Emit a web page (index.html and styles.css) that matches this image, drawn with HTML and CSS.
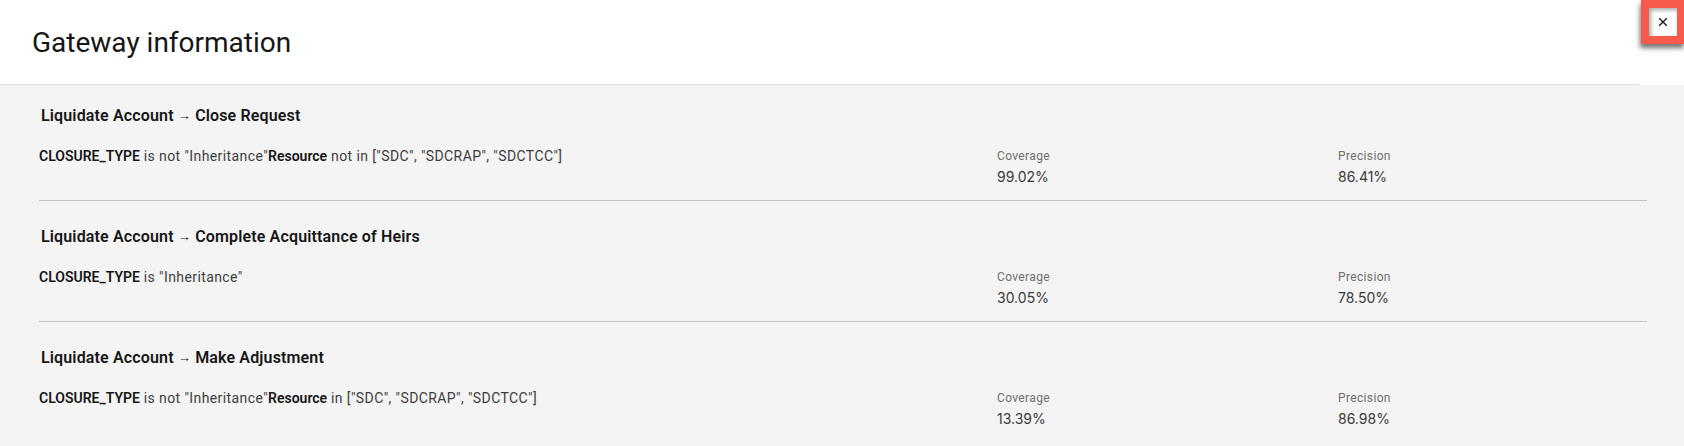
FILE: index.html
```html
<!DOCTYPE html>
<html lang="en">
<head>
<meta charset="utf-8">
<title>Gateway information</title>
<link rel="stylesheet" href="styles.css">
</head>
<body>
<div class="modal">
  <header class="modal-header">
    <h2 class="modal-title">Gateway information</h2>
  </header>
  <button class="close-btn" aria-label="Close">
    <svg width="16" height="16" viewBox="0 0 16 16" aria-hidden="true">
      <path d="M4.2 4.2 L11.8 11.8 M11.8 4.2 L4.2 11.8" stroke="#161616" stroke-width="1.3" fill="none"/>
    </svg>
  </button>
  <div class="modal-body">
    <section class="rule">
      <h3 class="rule-title">Liquidate Account <span class="arrow">→</span> Close Request</h3>
      <div class="rule-grid">
        <p class="cond"><b>CLOSURE_TYPE</b> is not "Inheritance"<b>Resource</b> not in ["SDC", "SDCRAP", "SDCTCC"]</p>
        <div class="metric"><span class="metric-label">Coverage</span><span class="metric-value">99.02%</span></div>
        <div class="metric"><span class="metric-label">Precision</span><span class="metric-value">86.41%</span></div>
      </div>
    </section>
    <section class="rule">
      <h3 class="rule-title">Liquidate Account <span class="arrow">→</span> Complete Acquittance of Heirs</h3>
      <div class="rule-grid">
        <p class="cond"><b>CLOSURE_TYPE</b> is "Inheritance"</p>
        <div class="metric"><span class="metric-label">Coverage</span><span class="metric-value">30.05%</span></div>
        <div class="metric"><span class="metric-label">Precision</span><span class="metric-value">78.50%</span></div>
      </div>
    </section>
    <section class="rule">
      <h3 class="rule-title">Liquidate Account <span class="arrow">→</span> Make Adjustment</h3>
      <div class="rule-grid">
        <p class="cond"><b>CLOSURE_TYPE</b> is not "Inheritance"<b>Resource</b> in ["SDC", "SDCRAP", "SDCTCC"]</p>
        <div class="metric"><span class="metric-label">Coverage</span><span class="metric-value">13.39%</span></div>
        <div class="metric"><span class="metric-label">Precision</span><span class="metric-value">86.98%</span></div>
      </div>
    </section>
  </div>
</div>
</body>
</html>
```

FILE: styles.css
```css
* { box-sizing: border-box; }
html, body { margin: 0; padding: 0; }
body {
  font-family: Roboto, "Liberation Sans", Arial, sans-serif;
  color: #161616;
  background: #f4f4f4;
}
.modal {
  position: relative;
  min-height: 446px;
  background: #f4f4f4;
}
.modal-header {
  background: #ffffff;
  height: 85px;
  padding-top: 25px;
  padding-right: 45px;
}
.modal-title {
  margin: 0;
  padding-left: 32px;
  font-size: 28px;
  line-height: 36px;
  font-weight: 400;
  color: #161616;
  height: 60px;
  border-bottom: 1px solid #e0e0e0;
}
.close-btn {
  position: absolute;
  top: 8px;
  left: 1649px;
  width: 44px;
  height: 44px;
  margin: -8px;
  padding: 0;
  border: 8px solid #f65a4d;
  background: #ffffff;
  display: flex;
  align-items: center;
  justify-content: center;
  box-shadow: -1px 4px 5px rgba(0,0,0,0.55), inset 2px 2px 4px rgba(0,0,0,0.35);
  cursor: pointer;
}
.modal-body {
  padding: 0 37px 0 39px;
}
.rule {
  padding: 25px 0 13px;
  border-bottom: 1px solid #c6c6c6;
}
.rule:first-child { padding-top: 20px; }
.rule:last-child { border-bottom: none; }
.rule-title {
  margin: 0 0 19px;
  padding-left: 2px;
  font-size: 16px;
  line-height: 22px;
  font-weight: 600;
  letter-spacing: 0.15px;
  color: #161616;
}
.arrow {
  font-size: 13px;
  font-weight: 400;
  vertical-align: 1px;
}
.rule-grid {
  display: grid;
  grid-template-columns: 958px 341px 1fr;
  align-items: start;
}
.cond {
  margin: 0;
  font-size: 14px;
  line-height: 20px;
  letter-spacing: 0.4px;
  color: #3d3d3d;
}
.cond b {
  font-weight: 600;
  letter-spacing: 0;
  color: #161616;
}
.metric {
  display: flex;
  flex-direction: column;
  padding-top: 2px;
}
.metric-label {
  font-size: 12px;
  line-height: 16px;
  letter-spacing: 0.35px;
  color: #6f6f6f;
}
.metric-value {
  margin-top: 3px;
  font-family: Inter, Roboto, sans-serif;
  font-size: 14px;
  line-height: 20px;
  color: #393939;
}
```
